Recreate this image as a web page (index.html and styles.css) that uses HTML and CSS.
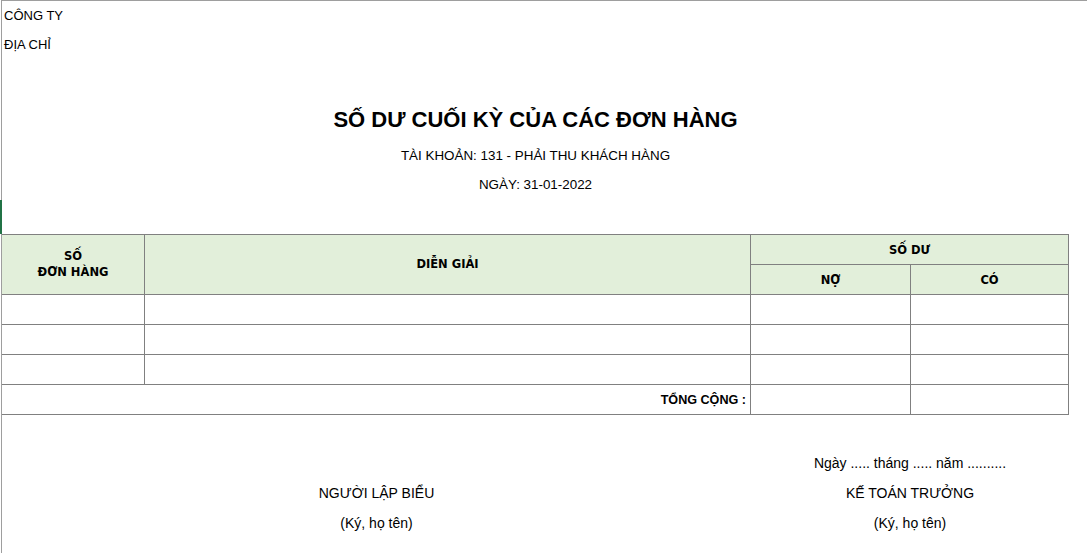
FILE: index.html
```html
<!DOCTYPE html>
<html lang="vi">
<head>
<meta charset="utf-8">
<title>Số dư cuối kỳ của các đơn hàng</title>
<link rel="stylesheet" href="styles.css">
</head>
<body>
<div class="sheet">
  <span class="sel-mark"></span>
  <div class="line company">CÔNG TY</div>
  <div class="line address">ĐỊA CHỈ</div>
  <div class="title-block">
    <h1 class="title">SỐ DƯ CUỐI KỲ CỦA CÁC ĐƠN HÀNG</h1>
    <div class="sub">TÀI KHOẢN: 131 - PHẢI THU KHÁCH HÀNG</div>
    <div class="sub last">NGÀY: 31-01-2022</div>
  </div>
  <table class="grid">
    <colgroup>
      <col class="c1"><col class="c2"><col class="c3"><col class="c4">
    </colgroup>
    <thead>
      <tr>
        <th rowspan="2" class="hd2">SỐ<br>ĐƠN HÀNG</th>
        <th rowspan="2" class="hd2">DIỄN GIẢI</th>
        <th colspan="2">SỐ DƯ</th>
      </tr>
      <tr>
        <th>NỢ</th>
        <th>CÓ</th>
      </tr>
    </thead>
    <tbody>
      <tr><td></td><td></td><td></td><td></td></tr>
      <tr><td></td><td></td><td></td><td></td></tr>
      <tr><td></td><td></td><td></td><td></td></tr>
      <tr class="total"><td colspan="2" class="total-label">TỔNG CỘNG :</td><td></td><td></td></tr>
    </tbody>
  </table>
  <div class="sign">
    <div></div>
    <div>Ngày ..... tháng ..... năm ..........</div>
    <div>NGƯỜI LẬP BIỂU</div>
    <div>KẾ TOÁN TRƯỞNG</div>
    <div>(Ký, họ tên)</div>
    <div>(Ký, họ tên)</div>
  </div>
</div>
</body>
</html>
```

FILE: styles.css
```css
* { box-sizing: border-box; }
html, body {
  margin: 0;
  padding: 0;
  background: #fff;
}
body {
  width: 1087px;
  height: 553px;
  overflow: hidden;
  padding-left: 1px;
  font-family: "Liberation Sans", Arial, sans-serif;
  font-size: 13px;
  color: #000;
}
.sheet {
  position: relative;
  height: 553px;
  border-left: 1px solid #9e9e9e;
  border-top: 1px solid #9e9e9e;
}
.sel-mark {
  position: absolute;
  left: -2px;
  top: 199px;
  width: 2px;
  height: 34px;
  background: #217346;
}
.line {
  height: 30px;
  line-height: 30px;
  padding-left: 2px;
}
.address { height: 29px; line-height: 28px; }
.title-block {
  width: 1067px;
  padding-top: 40px;
  text-align: center;
}
.title {
  margin: 0;
  height: 40px;
  line-height: 40px;
  font-size: 22px;
  font-weight: bold;
}
.sub {
  height: 30px;
  line-height: 32px;
  font-size: 13.4px;
}
.sub.last { height: 64px; line-height: 30px; }
.grid {
  border-collapse: separate;
  border-spacing: 0;
  table-layout: fixed;
  width: 1067px;
  border-top: 1px solid #808080;
}
.c1 { width: 143px; }
.c2 { width: 606px; }
.c3 { width: 160px; }
.c4 { width: 158px; }
.grid th, .grid td {
  height: 30px;
  padding: 0;
  border-right: 1px solid #808080;
  border-bottom: 1px solid #808080;
}
.grid th {
  background: #e2efda;
  font-family: "DejaVu Sans", Tahoma, sans-serif;
  font-size: 11.5px;
  font-weight: bold;
  text-align: center;
  vertical-align: middle;
  line-height: 16px;
}
.grid th.hd2 { padding-bottom: 2px; }
.grid td.total-label {
  text-align: right;
  font-weight: bold;
  font-size: 12.6px;
  padding-right: 4px;
}
.sign {
  display: grid;
  grid-template-columns: 749px 318px;
  grid-auto-rows: 30px;
  padding-top: 34px;
  text-align: center;
  line-height: 28px;
  font-size: 14px;
}
```
